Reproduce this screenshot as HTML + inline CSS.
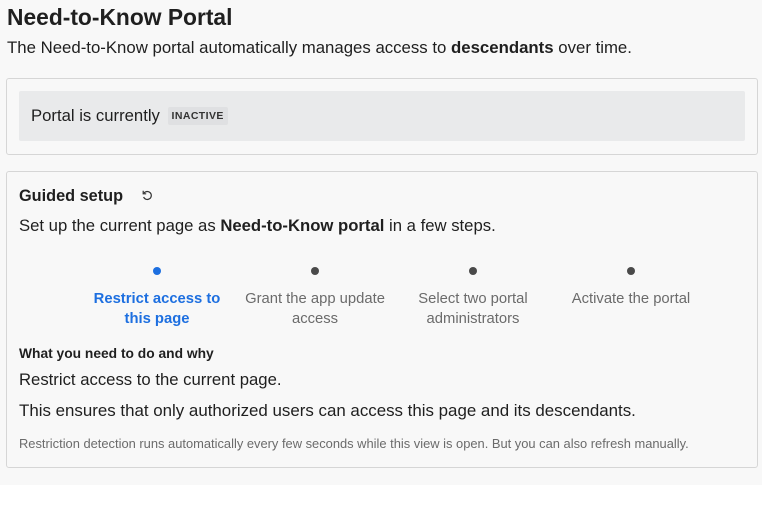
<!DOCTYPE html>
<html><head><style>
*{margin:0;padding:0;box-sizing:border-box}
body{width:762px;height:508px;background:#fff;font-family:"Liberation Sans",Arial,sans-serif;color:#1f1f1f;position:relative;overflow:hidden}
.bg{position:absolute;left:0;top:0;width:762px;height:485px;background:#f8f8f8}
.a{position:absolute;white-space:nowrap}
.card{position:absolute;border:1px solid #d6d6d6;border-radius:3px;background:#f8f8f8}
.dot{position:absolute;width:8px;height:8px;border-radius:50%;background:#4a4a4a}
.lbl{position:absolute;width:158px;text-align:center;font-size:14.8px;line-height:20px;color:#6b6b6b}
</style></head><body>
<div class="bg"></div>
<div class="a" style="left:7px;top:4px;font-size:22.8px;font-weight:bold;color:#1f1f1f">Need-to-Know Portal</div>
<div class="a" style="left:7px;top:38px;font-size:16.8px">The Need-to-Know portal automatically manages access to <b>descendants</b> over time.</div>
<div class="card" style="left:6px;top:78px;width:752px;height:77px"></div>
<div class="a" style="left:19px;top:91px;width:726px;height:50px;background:#e9eaeb;border-radius:2px"></div>
<div class="a" style="left:31px;top:106px;font-size:16.7px">Portal is currently <span style="display:inline-block;margin-left:3px;background:#dfe0e2;font-size:10.5px;font-weight:bold;padding:3px 4px;border-radius:2px;vertical-align:2px;color:#333;letter-spacing:.4px">INACTIVE</span></div>
<div class="card" style="left:6px;top:171px;width:752px;height:297px"></div>
<div class="a" style="left:19px;top:187px;font-size:16.3px;font-weight:bold">Guided setup</div>
<svg class="a" style="left:141px;top:189px" width="13" height="13" viewBox="0 0 13 13"><path d="M3 4.2A4 4 0 1 1 2.6 8" fill="none" stroke="#333" stroke-width="1.2"/><path d="M2.2 1.8V4.8H5.2" fill="none" stroke="#333" stroke-width="1.2"/></svg>
<div class="a" style="left:19px;top:216px;font-size:16.7px">Set up the current page as <b>Need-to-Know portal</b> in a few steps.</div>
<div class="dot" style="left:153px;top:267px;background:#1d6fe0"></div>
<div class="dot" style="left:311px;top:267px"></div>
<div class="dot" style="left:469px;top:267px"></div>
<div class="dot" style="left:627px;top:267px"></div>
<div class="lbl" style="left:87px;width:140px;top:289px;color:#1d6fe0;font-weight:bold">Restrict access to this page</div>
<div class="lbl" style="left:236px;top:289px">Grant the app update access</div>
<div class="lbl" style="left:394px;top:289px">Select two portal administrators</div>
<div class="lbl" style="left:552px;top:289px">Activate the portal</div>
<div class="a" style="left:19px;top:346px;font-size:13.8px;font-weight:bold">What you need to do and why</div>
<div class="a" style="left:19px;top:370px;font-size:16.7px">Restrict access to the current page.</div>
<div class="a" style="left:19px;top:401px;font-size:16.9px">This ensures that only authorized users can access this page and its descendants.</div>
<div class="a" style="left:19px;top:436px;font-size:12.9px;color:#6b6b6b">Restriction detection runs automatically every few seconds while this view is open. But you can also refresh manually.</div>
</body></html>
